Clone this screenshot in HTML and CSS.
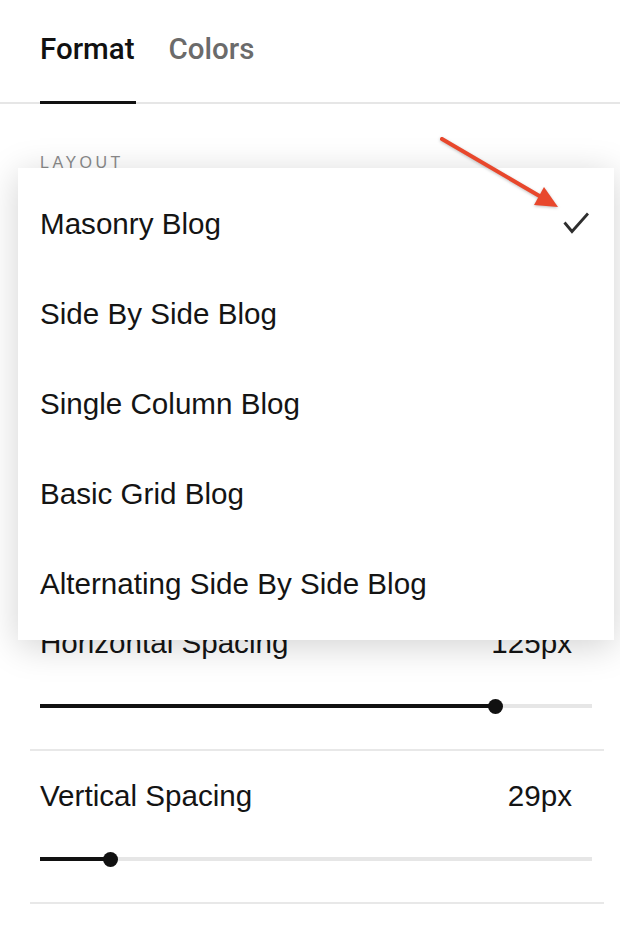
FILE: index.html
```html
<!DOCTYPE html>
<html lang="en">
<head>
<meta charset="utf-8">
<title>Blog Format</title>
<link rel="stylesheet" href="styles.css">
</head>
<body>
<div class="page">
  <nav class="tabs">
    <div class="tab active">Format</div>
    <div class="tab">Colors</div>
  </nav>

  <div class="content">
    <div class="section-label">Layout</div>
    <div class="covered"></div>

    <div class="setting">
      <div class="setting-head">
        <span>Horizontal Spacing</span>
        <span>125px</span>
      </div>
      <div class="slider">
        <div class="fill" style="width:455px"></div>
        <div class="thumb"></div>
        <div class="rest"></div>
      </div>
    </div>

    <div class="setting">
      <div class="setting-head">
        <span>Vertical Spacing</span>
        <span>29px</span>
      </div>
      <div class="slider">
        <div class="fill" style="width:70px"></div>
        <div class="thumb"></div>
        <div class="rest"></div>
      </div>
    </div>

    <ul class="menu">
      <li class="menu-item selected">
        <span>Masonry Blog</span>
        <svg class="check" width="26" height="22" viewBox="0 0 26 22"><path d="M1.5 10.5 L9 19.5 L25 1.5" fill="none" stroke="#2e2e2e" stroke-width="2.8"/></svg>
      </li>
      <li class="menu-item"><span>Side By Side Blog</span></li>
      <li class="menu-item"><span>Single Column Blog</span></li>
      <li class="menu-item"><span>Basic Grid Blog</span></li>
      <li class="menu-item"><span>Alternating Side By Side Blog</span></li>
    </ul>
  </div>

  <svg class="arrow" width="620" height="260" viewBox="0 0 620 260">
    <line x1="442" y1="139" x2="542" y2="197.5" stroke="#e8472c" stroke-width="4" stroke-linecap="round"/>
    <polygon points="558,207 534,205 544,187" fill="#e8472c"/>
  </svg>
</div>
</body>
</html>
```
FILE: styles.css
```css
* { box-sizing: border-box; }
html, body { margin: 0; padding: 0; background: #fff; }
body {
  font-family: "Liberation Sans", Arial, sans-serif;
  color: #141414;
  width: 620px;
  height: 942px;
  overflow: hidden;
}
.page { position: relative; }

.tabs {
  display: flex;
  gap: 33px;
  padding-left: 40px;
  height: 104px;
  border-bottom: 2px solid #e6e6e6;
}
.tab {
  font-family: Roboto, "Liberation Sans", sans-serif;
  font-weight: 500;
  font-size: 29.5px;
  line-height: 34px;
  padding-top: 32px;
  color: #6b6b6b;
}
.tab.active {
  color: #111;
  border-bottom: 3px solid #111;
  margin-bottom: -2px;
  padding-right: 1px;
}

.content {
  position: relative;
  padding-top: 49px;
}

.section-label {
  margin-left: 40px;
  font-size: 16px;
  line-height: 20px;
  letter-spacing: 3.5px;
  text-transform: uppercase;
  color: #8a8a8a;
}
.covered {
  height: 425px;
}

.setting {
  margin: 0 16px 0 30px;
  padding: 28px 12px 35px 10px;
  border-bottom: 2px solid #e8e8e8;
}
.setting-head {
  display: flex;
  justify-content: space-between;
  padding-right: 20px;
  font-size: 29.6px;
  line-height: 34px;
  color: #141414;
}
.slider {
  display: flex;
  align-items: center;
  height: 16px;
  margin-top: 38px;
}
.fill {
  height: 4px;
  background: #111;
  flex: none;
}
.thumb {
  width: 15px;
  height: 15px;
  border-radius: 50%;
  background: #111;
  margin: 0 -7.5px;
  position: relative;
  z-index: 1;
  flex: none;
}
.rest {
  flex: 1;
  height: 4px;
  background: #e6e6e6;
}

.menu {
  position: absolute;
  top: 64px;
  left: 18px;
  width: 596px;
  margin: 0;
  padding: 11px 0;
  list-style: none;
  background: #fff;
  box-shadow: 0 6px 34px rgba(0, 0, 0, 0.18);
  z-index: 5;
}
.menu-item {
  display: flex;
  justify-content: space-between;
  align-items: center;
  height: 90px;
  padding: 0 25px 0 22px;
  font-size: 29.6px;
  color: #141414;
}
.check { display: block; margin-top: -3px; }

.arrow {
  position: absolute;
  top: 0;
  left: 0;
  z-index: 10;
  filter: drop-shadow(0 1px 1.5px rgba(0, 0, 0, 0.25));
}
```
